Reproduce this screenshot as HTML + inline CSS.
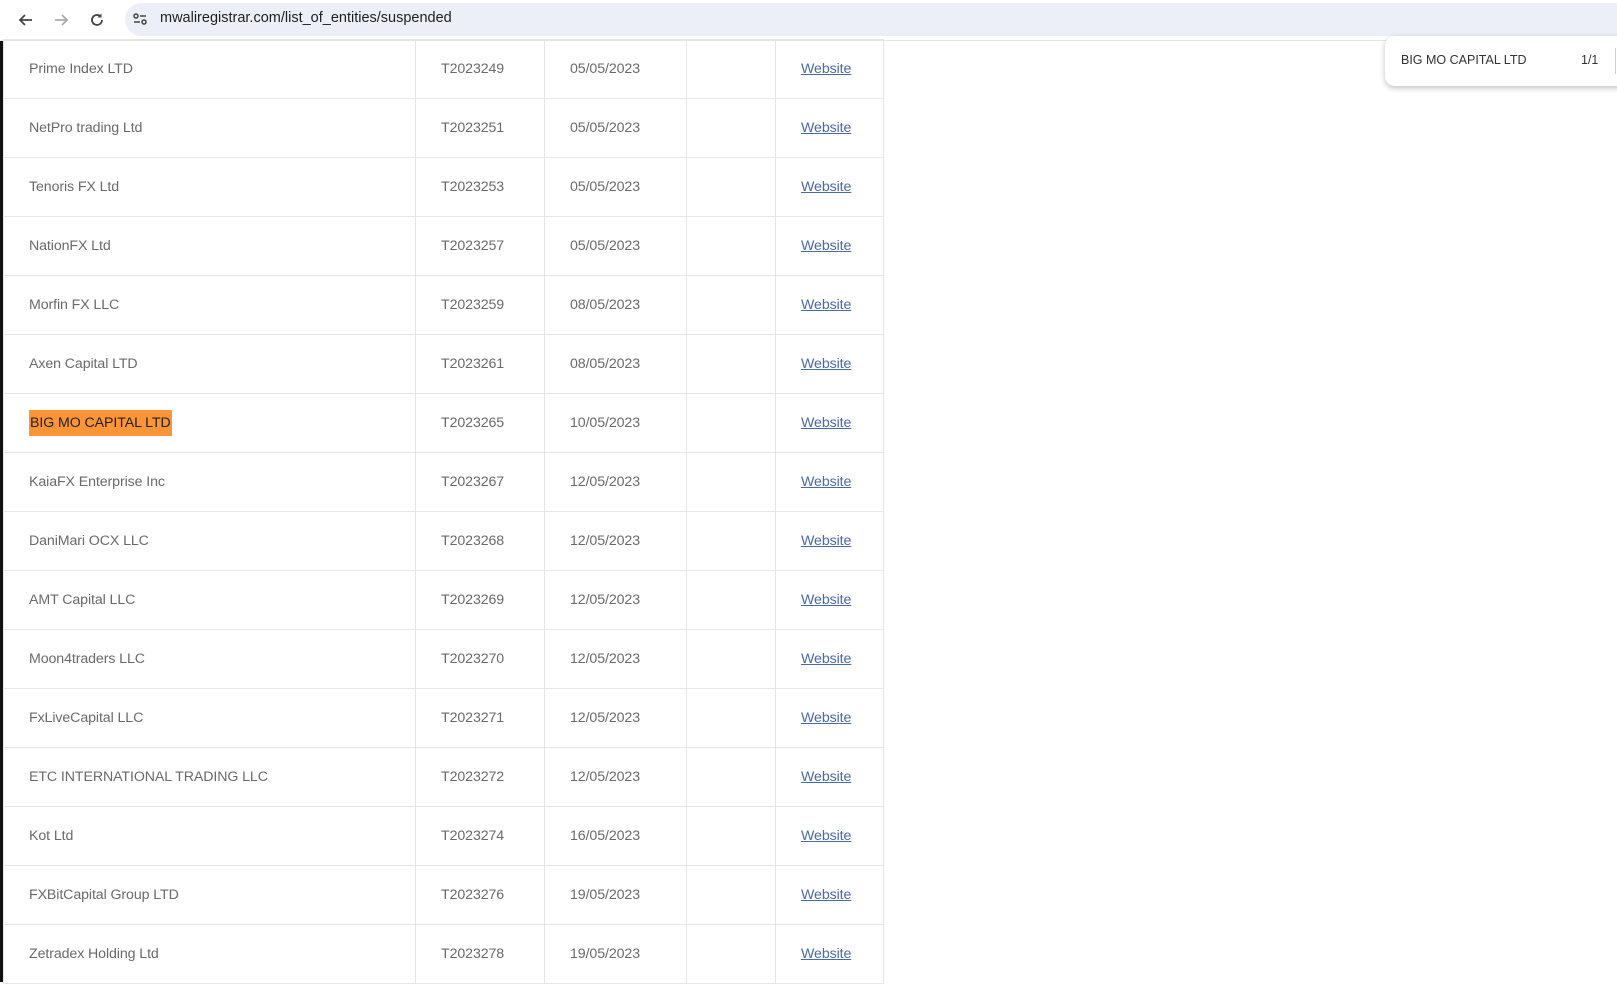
<!DOCTYPE html>
<html><head><style>
*{margin:0;padding:0;box-sizing:border-box}
body{width:1617px;height:982px;overflow:hidden;background:#fff;font-family:"Liberation Sans",sans-serif;position:relative}
.bar{position:absolute;left:0;top:0;width:1617px;height:41px;background:#fff;border-bottom:1px solid #e3e5ea}
.pill{position:absolute;left:125px;top:3px;right:-20px;height:33px;border-radius:17px;background:#edeff8}
.url{position:absolute;left:160px;top:10px;font-size:14.5px;color:#1f1f1f}
.ic{position:absolute;top:10px}
.strip{position:absolute;left:0;top:41px;width:3px;height:941px;background:#111}
table{position:absolute;left:3px;top:39px;border-collapse:collapse}
td{height:59px;border:1px solid #e6e6e6;font-size:14.2px;color:#6a6a6a;padding:0 0 0 25px;white-space:nowrap;letter-spacing:-0.1px}
td.a{width:412px}td.b{width:129px}td.c{width:142px}td.d{width:89px}td.e{width:108px}
td a{color:#4a6aa5;text-decoration:underline}
.hl{background:#fb9537;color:#222;padding:5px 1px}
.find{position:absolute;left:1385px;top:36px;width:260px;height:50px;background:#fff;border-radius:10px;box-shadow:0 2px 6px rgba(0,0,0,.25);font-size:12.5px;color:#333}
</style></head><body>
<div class="bar">
<svg class="ic" style="left:16px" width="20" height="20" viewBox="0 0 20 20"><path d="M16 10H4M9 5l-5 5 5 5" stroke="#444" stroke-width="1.8" fill="none"/></svg>
<svg class="ic" style="left:51px" width="20" height="20" viewBox="0 0 20 20"><path d="M4 10h12M11 5l5 5-5 5" stroke="#aaa" stroke-width="1.8" fill="none"/></svg>
<svg class="ic" style="left:87px" width="20" height="20" viewBox="0 0 20 20"><path d="M15 10a5 5 0 1 1-1.5-3.6" stroke="#444" stroke-width="1.8" fill="none"/><path d="M14.5 3.5v4h-4z" fill="#444"/></svg>
<div class="pill"></div>
<svg class="ic" style="left:131px" width="18" height="18" viewBox="0 0 18 18"><circle cx="5" cy="6" r="2" stroke="#444" stroke-width="1.5" fill="none"/><path d="M9 6h6M3 12h6" stroke="#444" stroke-width="1.5"/><circle cx="13" cy="12" r="2" stroke="#444" stroke-width="1.5" fill="none"/></svg>
<div class="url">mwaliregistrar.com/list_of_entities/suspended</div>
</div>
<div class="strip"></div>
<table>
<tr><td class="a">Prime Index LTD</td><td class="b">T2023249</td><td class="c">05/05/2023</td><td class="d"></td><td class="e"><a>Website</a></td></tr>
<tr><td class="a">NetPro trading Ltd</td><td class="b">T2023251</td><td class="c">05/05/2023</td><td class="d"></td><td class="e"><a>Website</a></td></tr>
<tr><td class="a">Tenoris FX Ltd</td><td class="b">T2023253</td><td class="c">05/05/2023</td><td class="d"></td><td class="e"><a>Website</a></td></tr>
<tr><td class="a">NationFX Ltd</td><td class="b">T2023257</td><td class="c">05/05/2023</td><td class="d"></td><td class="e"><a>Website</a></td></tr>
<tr><td class="a">Morfin FX LLC</td><td class="b">T2023259</td><td class="c">08/05/2023</td><td class="d"></td><td class="e"><a>Website</a></td></tr>
<tr><td class="a">Axen Capital LTD</td><td class="b">T2023261</td><td class="c">08/05/2023</td><td class="d"></td><td class="e"><a>Website</a></td></tr>
<tr><td class="a"><span class="hl">BIG MO CAPITAL LTD</span></td><td class="b">T2023265</td><td class="c">10/05/2023</td><td class="d"></td><td class="e"><a>Website</a></td></tr>
<tr><td class="a">KaiaFX Enterprise Inc</td><td class="b">T2023267</td><td class="c">12/05/2023</td><td class="d"></td><td class="e"><a>Website</a></td></tr>
<tr><td class="a">DaniMari OCX LLC</td><td class="b">T2023268</td><td class="c">12/05/2023</td><td class="d"></td><td class="e"><a>Website</a></td></tr>
<tr><td class="a">AMT Capital LLC</td><td class="b">T2023269</td><td class="c">12/05/2023</td><td class="d"></td><td class="e"><a>Website</a></td></tr>
<tr><td class="a">Moon4traders LLC</td><td class="b">T2023270</td><td class="c">12/05/2023</td><td class="d"></td><td class="e"><a>Website</a></td></tr>
<tr><td class="a">FxLiveCapital LLC</td><td class="b">T2023271</td><td class="c">12/05/2023</td><td class="d"></td><td class="e"><a>Website</a></td></tr>
<tr><td class="a">ETC INTERNATIONAL TRADING LLC</td><td class="b">T2023272</td><td class="c">12/05/2023</td><td class="d"></td><td class="e"><a>Website</a></td></tr>
<tr><td class="a">Kot Ltd</td><td class="b">T2023274</td><td class="c">16/05/2023</td><td class="d"></td><td class="e"><a>Website</a></td></tr>
<tr><td class="a">FXBitCapital Group LTD</td><td class="b">T2023276</td><td class="c">19/05/2023</td><td class="d"></td><td class="e"><a>Website</a></td></tr>
<tr><td class="a">Zetradex Holding Ltd</td><td class="b">T2023278</td><td class="c">19/05/2023</td><td class="d"></td><td class="e"><a>Website</a></td></tr>
</table>
<div class="find"><span style="position:absolute;left:16px;top:17px">BIG MO CAPITAL LTD</span><span style="position:absolute;left:196px;top:17px">1/1</span><span style="position:absolute;left:230px;top:12px;width:1px;height:26px;background:#ccc"></span></div>
</body></html>
